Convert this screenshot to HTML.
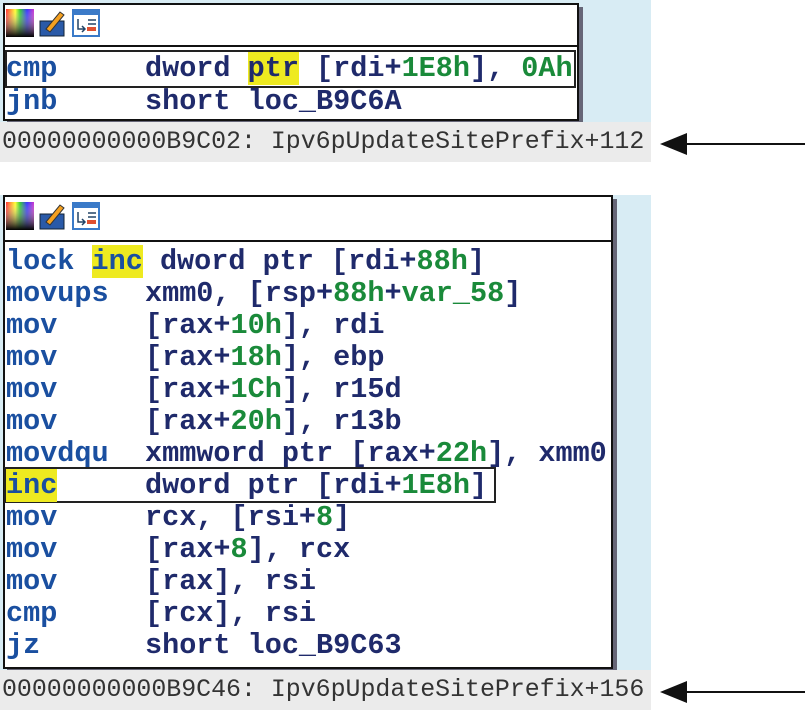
<!DOCTYPE html>
<html><head><style>
*{margin:0;padding:0;box-sizing:border-box}
body{width:805px;height:710px;background:#fff;position:relative;overflow:hidden;font-family:"Liberation Mono","DejaVu Sans Mono",monospace}
.blue{position:absolute;background:#d8ecf4}
.box{position:absolute;background:#fff;border:2px solid #111;box-shadow:4px 4px 0 #667}
.tb{position:absolute;left:0;right:0;top:0;border-bottom:2px solid #111}
.ln{position:absolute;left:6px;font-size:28.5px;font-weight:bold;color:#1f2a6b;white-space:pre;line-height:32px;height:32px;width:600px}
.ln .o{position:absolute;left:139px;top:0}
.m{color:#1a4fa0}.n{color:#1a8a3a}.y{background:#eeea20}
.st{position:absolute;left:0;width:651px;height:40px;background:#ebebeb;font-size:24.9px;color:#333;line-height:40px;padding-left:2px;white-space:pre}
.hl{position:absolute;border:2px solid #222}
.arr{position:absolute;left:660px;width:145px;height:22px}
.ic{position:absolute;top:6px;width:28px;height:28px}
</style></head><body>
<div class="blue" style="left:0;top:0;width:651px;height:122px"></div>
<div class="box" style="left:3px;top:3px;width:576px;height:118px">
 <div class="tb" style="height:42px"></div>
</div>
<svg class="ic" style="left:6px;top:9px" viewBox="0 0 28 28"><defs><linearGradient id="g" x1="0" x2="1"><stop offset="0" stop-color="#f33"/><stop offset=".33" stop-color="#ff3"/><stop offset=".5" stop-color="#3c3"/><stop offset=".75" stop-color="#33f"/><stop offset="1" stop-color="#c3c"/></linearGradient><linearGradient id="h" x1="0" y1="0" x2="0" y2="1"><stop offset="0" stop-color="#fff" stop-opacity="0"/><stop offset="1" stop-color="#000"/></linearGradient></defs><rect width="28" height="28" fill="url(#g)"/><rect width="28" height="28" fill="url(#h)"/></svg>
<svg class="ic" style="left:38px;top:9px" viewBox="0 0 28 28"><rect x="2" y="12" width="24" height="15" fill="#2a5aa8" stroke="#123"/><path d="M8 20 L22 3 L26 6 L12 23 Z" fill="#f4a020" stroke="#333"/></svg>
<svg class="ic" style="left:72px;top:9px" viewBox="0 0 28 28"><rect x="1" y="1" width="26" height="26" fill="#fff" stroke="#3a7ac8" stroke-width="2"/><rect x="1" y="1" width="26" height="5" fill="#3a7ac8"/><path d="M6 10v10h6M10 17l3 3-3 3M16 11h8M16 15h8" stroke="#246" fill="none" stroke-width="1.5"/><rect x="15" y="18" width="9" height="4" fill="#e05030"/></svg>
<div class="hl" style="left:5px;top:50px;width:571px;height:38px"></div>
<div class="ln" style="top:53px"><span class="m">cmp</span><span class="o">dword <span class="y">ptr</span> [rdi+<span class="n">1E8h</span>], <span class="n">0Ah</span></span></div>
<div class="ln" style="top:86px"><span class="m">jnb</span><span class="o">short loc_B9C6A</span></div>
<div class="st" style="top:122px">00000000000B9C02: Ipv6pUpdateSitePrefix+112</div>
<svg class="arr" style="top:133px" viewBox="0 0 145 22"><path d="M0 11 L27 0 L27 22 Z" fill="#111"/><rect x="25" y="10" width="120" height="2" fill="#111"/></svg>

<div class="blue" style="left:0;top:195px;width:651px;height:475px"></div>
<div class="box" style="left:3px;top:195px;width:610px;height:474px">
 <div class="tb" style="height:45px"></div>
</div>
<svg class="ic" style="left:6px;top:202px" viewBox="0 0 28 28"><rect width="28" height="28" fill="url(#g)"/><rect width="28" height="28" fill="url(#h)"/></svg>
<svg class="ic" style="left:38px;top:202px" viewBox="0 0 28 28"><rect x="2" y="12" width="24" height="15" fill="#2a5aa8" stroke="#123"/><path d="M8 20 L22 3 L26 6 L12 23 Z" fill="#f4a020" stroke="#333"/></svg>
<svg class="ic" style="left:72px;top:202px" viewBox="0 0 28 28"><rect x="1" y="1" width="26" height="26" fill="#fff" stroke="#3a7ac8" stroke-width="2"/><rect x="1" y="1" width="26" height="5" fill="#3a7ac8"/><path d="M6 10v10h6M10 17l3 3-3 3M16 11h8M16 15h8" stroke="#246" fill="none" stroke-width="1.5"/><rect x="15" y="18" width="9" height="4" fill="#e05030"/></svg>
<div class="ln" style="top:246px"><span class="m">lock</span> <span class="m y">inc</span> dword ptr [rdi+<span class="n">88h</span>]</div>
<div class="ln" style="top:278px"><span class="m">movups</span><span class="o">xmm0, [rsp+<span class="n">88h</span>+<span class="n">var_58</span>]</span></div>
<div class="ln" style="top:310px"><span class="m">mov</span><span class="o">[rax+<span class="n">10h</span>], rdi</span></div>
<div class="ln" style="top:342px"><span class="m">mov</span><span class="o">[rax+<span class="n">18h</span>], ebp</span></div>
<div class="ln" style="top:374px"><span class="m">mov</span><span class="o">[rax+<span class="n">1Ch</span>], r15d</span></div>
<div class="ln" style="top:406px"><span class="m">mov</span><span class="o">[rax+<span class="n">20h</span>], r13b</span></div>
<div class="ln" style="top:438px"><span class="m">movdqu</span><span class="o">xmmword ptr [rax+<span class="n">22h</span>], xmm0</span></div>
<div class="hl" style="left:4px;top:467px;width:492px;height:36px"></div>
<div class="ln" style="top:470px"><span class="m y">inc</span><span class="o">dword ptr [rdi+<span class="n">1E8h</span>]</span></div>
<div class="ln" style="top:502px"><span class="m">mov</span><span class="o">rcx, [rsi+<span class="n">8</span>]</span></div>
<div class="ln" style="top:534px"><span class="m">mov</span><span class="o">[rax+<span class="n">8</span>], rcx</span></div>
<div class="ln" style="top:566px"><span class="m">mov</span><span class="o">[rax], rsi</span></div>
<div class="ln" style="top:598px"><span class="m">cmp</span><span class="o">[rcx], rsi</span></div>
<div class="ln" style="top:630px"><span class="m">jz</span><span class="o">short loc_B9C63</span></div>
<div class="st" style="top:670px">00000000000B9C46: Ipv6pUpdateSitePrefix+156</div>
<svg class="arr" style="top:681px" viewBox="0 0 145 22"><path d="M0 11 L27 0 L27 22 Z" fill="#111"/><rect x="25" y="10" width="120" height="2" fill="#111"/></svg>
</body></html>
